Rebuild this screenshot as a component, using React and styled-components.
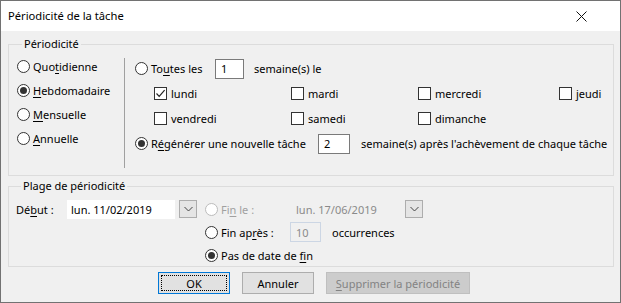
import React from "react";
import styled, { createGlobalStyle } from "styled-components";

const Global = createGlobalStyle`
  * { box-sizing: border-box; }
  html, body { margin: 0; padding: 0; background: #ffffff; }
  body {
    font-family: "Segoe UI", "Noto Sans", sans-serif;
    font-size: 11px;
    color: #000;
    white-space: nowrap;
  }
`;

const Window = styled.div`
  width: 621px;
  height: 303px;
  border: 1px solid #727272;
  background: #f0f0f0;
  display: flex;
  flex-direction: column;
`;

const TitleBar = styled.div`
  height: 30px;
  flex: none;
  background: #ffffff;
  display: flex;
  align-items: center;
  justify-content: space-between;
  padding: 0 33px 0 7px;
`;

const Title = styled.span`
  font-size: 11.2px;
  line-height: 16px;
`;

const Body = styled.div`
  flex: 1;
  padding: 5px 6px 0 7px;
  display: flex;
  flex-direction: column;
`;

const Group = styled.fieldset`
  margin: 0 0 ${(p) => p.$after || 0}px;
  padding: ${(p) => p.$pad};
  border: 1px solid #dcdcdc;
  min-width: 0;
  height: ${(p) => p.$h}px;
`;

const Legend = styled.legend`
  margin-left: 5px;
  padding: 0 2px;
  line-height: 16px;
`;

const PeriodGrid = styled.div`
  display: grid;
  grid-template-columns: 107px 1px 1fr;
  height: 114px;
`;

const Column = styled.div`
  display: flex;
  flex-direction: column;
  padding-left: ${(p) => p.$indent || 0}px;
  padding-top: ${(p) => p.$top || 0}px;
`;

const Separator = styled.div`
  background: #a0a0a0;
  margin-top: 4px;
`;

const Row = styled.div`
  height: ${(p) => p.$h}px;
  display: flex;
  align-items: center;
  flex: none;
`;

const DayGrid = styled.div`
  height: 25px;
  display: grid;
  grid-template-columns: 137px 127px 141px auto;
  align-items: center;
  padding-left: 19px;
`;

const Option = styled.label`
  display: flex;
  align-items: center;
  gap: 3px;
  width: ${(p) => (p.$w ? `${p.$w}px` : "auto")};
  flex: none;
  color: ${(p) => (p.$disabled ? "#a0a0a0" : "#000")};
`;

const Circle = styled.span`
  width: 13px;
  height: 13px;
  border-radius: 50%;
  border: 1px solid ${(p) => (p.$disabled ? "#bcbcbc" : "#333333")};
  background: #ffffff;
  display: flex;
  align-items: center;
  justify-content: center;
  flex: none;
  &::after {
    content: "";
    width: 7px;
    height: 7px;
    border-radius: 50%;
    background: #333333;
    display: ${(p) => (p.$on ? "block" : "none")};
  }
`;

const Box = styled.span`
  width: 13px;
  height: 13px;
  border: 1px solid #333333;
  background: #ffffff;
  display: flex;
  align-items: center;
  justify-content: center;
  flex: none;
  margin-right: 1px;
`;

const Key = styled.u`
  text-decoration-thickness: 1px;
  text-underline-offset: 2px;
`;

const Field = styled.div`
  width: ${(p) => p.$w}px;
  height: 20px;
  border: 1px solid ${(p) => (p.$disabled ? "#ccd6e4" : "#7a7a7a")};
  background: ${(p) => (p.$disabled ? "#f0f0f0" : "#ffffff")};
  color: ${(p) => (p.$disabled ? "#8a8a8a" : "#000")};
  padding: 0 0 0 5px;
  display: flex;
  align-items: center;
  flex: none;
`;

const Text = styled.span`
  margin-left: ${(p) => p.$gap || 0}px;
  color: ${(p) => (p.$disabled ? "#8a8a8a" : "#000")};
`;

const RangeGrid = styled.div`
  display: flex;
`;

const StartPart = styled.div`
  display: flex;
  align-items: flex-start;
  width: 189px;
  flex: none;
`;

const StartLabel = styled.span`
  width: 51px;
  line-height: 20px;
  margin-top: 2px;
`;

const Combo = styled.div`
  display: flex;
  gap: 4px;
  margin-top: ${(p) => p.$top || 0}px;
`;

const ComboText = styled.div`
  width: ${(p) => p.$w}px;
  height: 19px;
  background: ${(p) => (p.$disabled ? "transparent" : "#ffffff")};
  color: ${(p) => (p.$disabled ? "#8a8a8a" : "#000")};
  padding-left: ${(p) => (p.$disabled ? 6 : 4)}px;
  display: flex;
  align-items: center;
`;

const DropButton = styled.div`
  width: 18px;
  height: 18px;
  border: 1px solid #adadad;
  background: #e5e5e5;
  display: flex;
  align-items: center;
  justify-content: center;
`;

const EndPart = styled.div`
  display: flex;
  flex-direction: column;
  gap: 1px;
`;

const Footer = styled.div`
  display: flex;
  justify-content: center;
  gap: 12px;
  margin-top: 5px;
  padding-left: 6px;
`;

const Button = styled.button`
  width: ${(p) => p.$w}px;
  height: 22px;
  font: inherit;
  padding: 0;
  background: ${(p) => (p.$disabled ? "#cccccc" : "#e1e1e1")};
  color: ${(p) => (p.$disabled ? "#838383" : "#000")};
  border: 1px solid ${(p) => (p.$primary ? "#0078d7" : p.$disabled ? "#bfbfbf" : "#adadad")};
  outline: ${(p) => (p.$primary ? "1px dotted #000" : "none")};
  outline-offset: -4px;
  display: flex;
  align-items: center;
  justify-content: center;
`;

const Radio = ({ on, disabled, w, children }) => (
  <Option $w={w} $disabled={disabled}>
    <Circle $on={on} $disabled={disabled} />
    <span>{children}</span>
  </Option>
);

const Check = ({ on, children }) => (
  <Option>
    <Box>
      {on && (
        <svg width="11" height="11" viewBox="0 0 11 11">
          <path d="M1.5 5.5 L4.2 8.3 L9.6 2.2" fill="none" stroke="#222" strokeWidth="1.2" />
        </svg>
      )}
    </Box>
    <span>{children}</span>
  </Option>
);

const Chevron = () => (
  <svg width="9" height="6" viewBox="0 0 9 6">
    <path d="M0.5 1 L4.5 5 L8.5 1" fill="none" stroke="#444" strokeWidth="1" />
  </svg>
);

const CloseIcon = () => (
  <svg width="11" height="11" viewBox="0 0 11 11">
    <path d="M0.5 0.5 L10.5 10.5 M10.5 0.5 L0.5 10.5" stroke="#111" strokeWidth="1" />
  </svg>
);

export default function App() {
  return (
    <>
      <Global />
      <Window>
        <TitleBar>
          <Title>Périodicité de la tâche</Title>
          <CloseIcon />
        </TitleBar>
        <Body>
          <Group $h={140} $pad="2px 0 7px 8px" $after={2}>
            <Legend>Périodicité</Legend>
            <PeriodGrid>
              <Column>
                <Row $h={24}>
                  <Radio>Quo<Key>t</Key>idienne</Radio>
                </Row>
                <Row $h={24}>
                  <Radio on><Key>H</Key>ebdomadaire</Radio>
                </Row>
                <Row $h={24}>
                  <Radio><Key>M</Key>ensuelle</Radio>
                </Row>
                <Row $h={24}>
                  <Radio><Key>A</Key>nnuelle</Radio>
                </Row>
              </Column>
              <Separator />
              <Column $indent={10} $top={2}>
                <Row $h={25}>
                  <Radio w={80}>To<Key>u</Key>tes les</Radio>
                  <Field $w={29}>1</Field>
                  <Text $gap={10}>semaine(s) le</Text>
                </Row>
                <DayGrid>
                  <Check on>lundi</Check>
                  <Check>mardi</Check>
                  <Check>mercredi</Check>
                  <Check>jeudi</Check>
                </DayGrid>
                <DayGrid>
                  <Check>vendredi</Check>
                  <Check>samedi</Check>
                  <Check>dimanche</Check>
                </DayGrid>
                <Row $h={25}>
                  <Radio on w={183}>R<Key>é</Key>générer une nouvelle tâche</Radio>
                  <Field $w={32}>2</Field>
                  <Text $gap={11}>semaine(s) après l'achèvement de chaque tâche</Text>
                </Row>
              </Column>
            </PeriodGrid>
          </Group>

          <Group $h={89} $pad="4px 0 0 7px">
            <Legend>Plage de périodicité</Legend>
            <RangeGrid>
              <StartPart>
                <StartLabel>Dé<Key>b</Key>ut :</StartLabel>
                <Combo $top={2}>
                  <ComboText $w={108}>lun. 11/02/2019</ComboText>
                  <DropButton><Chevron /></DropButton>
                </Combo>
              </StartPart>
              <EndPart>
                <Row $h={22}>
                  <Radio disabled w={85}>Fi<Key>n</Key> le :</Radio>
                  <Combo>
                    <ComboText $w={111} $disabled>lun. 17/06/2019</ComboText>
                    <DropButton><Chevron /></DropButton>
                  </Combo>
                </Row>
                <Row $h={22}>
                  <Radio w={85}>Fin ap<Key>r</Key>ès :</Radio>
                  <Field $w={31} $disabled>10</Field>
                  <Text $gap={11}>occurrences</Text>
                </Row>
                <Row $h={22}>
                  <Radio on>Pas de date de <Key>f</Key>in</Radio>
                </Row>
              </EndPart>
            </RangeGrid>
          </Group>

          <Footer>
            <Button $w={72} $primary>OK</Button>
            <Button $w={72}>Annuler</Button>
            <Button $w={144} $disabled><span><Key>S</Key>upprimer la périodicité</span></Button>
          </Footer>
        </Body>
      </Window>
    </>
  );
}
